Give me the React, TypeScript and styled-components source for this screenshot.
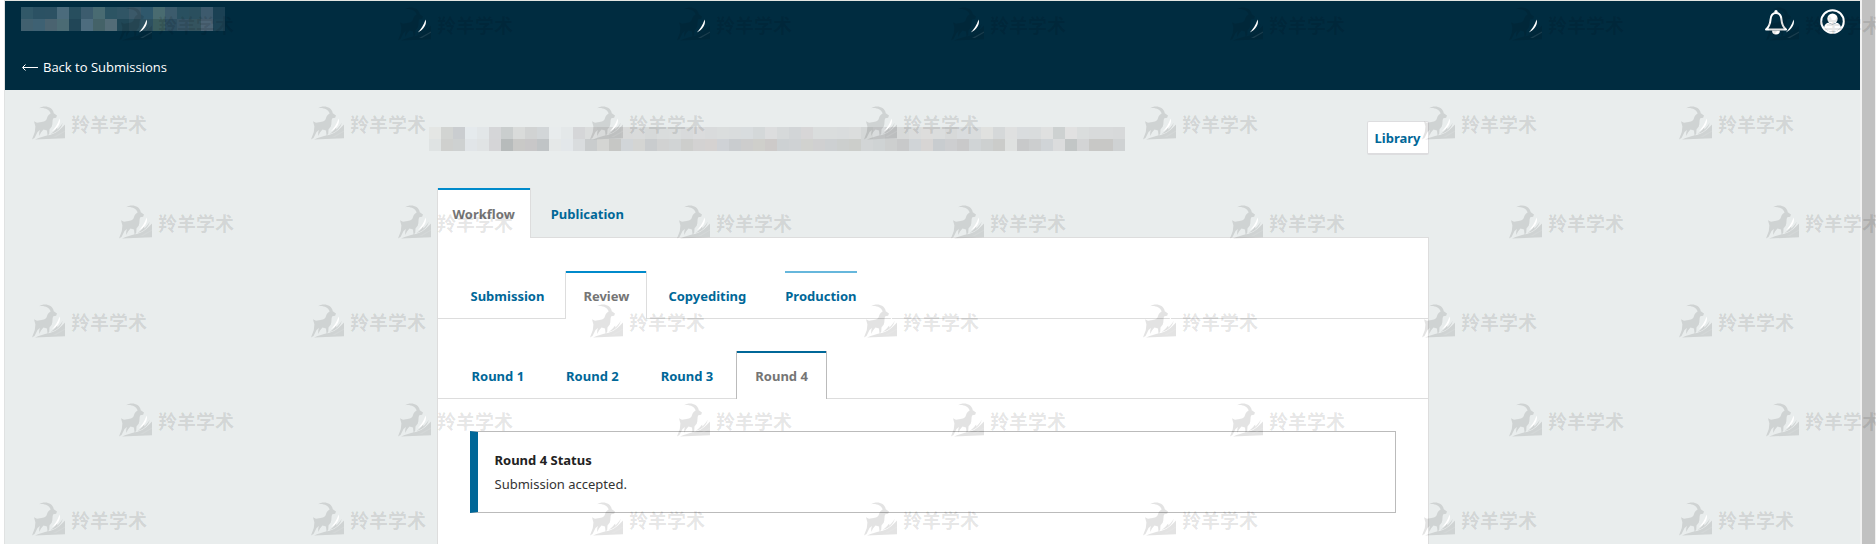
import React from "react";
import styled, { createGlobalStyle } from "styled-components";

const GlobalStyle = createGlobalStyle`
  *, *::before, *::after { box-sizing: border-box; }
  body {
    margin: 0;
    background: #fff;
    color: #222;
    font-family: "Noto Sans", "Open Sans", sans-serif;
    font-size: 13px;
    line-height: 24px;
  }
  button { font: inherit; cursor: pointer; }
`;

const Frame = styled.div`
  position: relative;
  display: flex;
  min-height: 100vh;
  padding-left: 4px;
  overflow: hidden;
`;

const Page = styled.div`
  flex: 1;
  min-width: 0;
  display: flex;
  flex-direction: column;
  background: #e9eded;
  border-left: 1px solid #e0e2e2;
  border-top: 1px solid #e3e6e2;
`;

const ScrollTrack = styled.div`
  flex: none;
  width: 16px;
  padding: 0 1px 0 2px;
  background: #f1f1f1;
  display: flex;
`;

const ScrollThumb = styled.div`
  flex: 1;
  background: #c1c1c1;
`;

const Header = styled.header`
  display: flex;
  justify-content: space-between;
  align-items: flex-start;
  height: 89px;
  padding: 6px 15px 0 16px;
  background: #002c40;
`;

const HeaderLeft = styled.div`
  display: flex;
  flex-direction: column;
  gap: 24px;
`;

const HeaderActions = styled.nav`
  display: flex;
  gap: 32px;
  padding-top: 2px;
`;

const IconButton = styled.button`
  display: flex;
  padding: 0;
  border: 0;
  background: none;
  color: #fff;
`;

const BackLink = styled.a`
  display: flex;
  align-items: center;
  gap: 5px;
  color: #fff;
  font-family: "Open Sans", sans-serif;
  text-decoration: none;
`;

const Mosaic = styled.div<{ $cols: number }>`
  display: grid;
  grid-template-columns: repeat(${(p) => p.$cols}, 12px);
  grid-auto-rows: 12px;
`;

const Cell = styled.span<{ $c: string }>`
  background: ${(p) => p.$c};
`;

const Container = styled.main`
  flex: 1;
  display: flex;
  flex-direction: column;
  width: 100%;
  max-width: 992px;
  margin: 0 auto;
  padding-top: 31px;
`;

const TitleRow = styled.div`
  display: flex;
  justify-content: space-between;
  align-items: flex-end;
  height: 34px;
  margin: 0 0 33px -8px;

  ${Mosaic} {
    margin-bottom: 4px;
  }
`;

const LibraryButton = styled.button`
  height: 34px;
  padding: 0 7px;
  background: #fff;
  border: 1px solid #dddddf;
  border-bottom-width: 2px;
  border-radius: 2px;
  color: #006798;
  font-weight: 700;
`;

type Kind = "page" | "stage" | "round";
const tabStyles: Record<Kind, { pad: number; height: number; gap: number; inset: number }> = {
  page: { pad: 15, height: 50, gap: 4, inset: 0 },
  stage: { pad: 17, height: 48, gap: 3, inset: 15 },
  round: { pad: 18, height: 48, gap: 4, inset: 15 },
};

const TabList = styled.div<{ $kind: Kind }>`
  display: flex;
  gap: ${(p) => tabStyles[p.$kind].gap}px;
  padding-left: ${(p) => tabStyles[p.$kind].inset}px;
  ${(p) => p.$kind !== "page" && "border-bottom: 1px solid #ddd;"}
`;

const TabButton = styled.button<{ $kind: Kind; $active?: boolean }>`
  height: ${(p) => tabStyles[p.$kind].height}px;
  margin-bottom: -1px;
  padding: 0 ${(p) => tabStyles[p.$kind].pad}px;
  border: 1px solid transparent;
  border-width: 0 1px;
  background: none;
  color: #006798;
  font-weight: 700;
  ${(p) =>
    p.$active &&
    `
    position: relative;
    color: #757575;
    background: #fff;
    border-color: ${p.$kind === "round" ? "#bbb" : "#ddd"};
    box-shadow: inset 0 2px 0 ${p.$kind === "round" ? "#006798" : "#008acb"};
  `}
`;

const TabLabel = styled.span<{ $marked?: boolean }>`
  display: flex;
  align-items: center;
  height: 100%;
  padding-top: 1px;
  ${(p) => p.$marked && "box-shadow: inset 0 2px 0 #66b7dc;"}
`;

const Panel = styled.section`
  flex: 1;
  display: flex;
  flex-direction: column;
  gap: 32px;
  padding: 33px 0 30px;
  background: #fff;
  border: 1px solid #ddd;
  border-bottom: 0;
`;

const Status = styled.div`
  margin: 0 32px;
  padding: 16px 17px;
  border: 1px solid #bbb;
  border-left: 8px solid #006798;
`;

const StatusTitle = styled.h2`
  margin: 0;
  font-size: 13px;
  line-height: 24px;
`;

const StatusText = styled.p`
  margin: 0;
  color: #333;
`;

const WatermarkLayer = styled.div`
  position: absolute;
  inset: 0;
  overflow: hidden;
  pointer-events: none;
`;

const Mark = styled.div<{ $x: number; $y: number }>`
  position: absolute;
  left: ${(p) => p.$x}px;
  top: ${(p) => p.$y}px;
  display: flex;
  align-items: flex-start;
  gap: 5px;
  color: rgba(0, 0, 0, 0.11);
  font: 700 19px/36px "Noto Sans CJK SC", sans-serif;
  white-space: nowrap;
`;

const headerCells = [
  "#315868", "#2b5163", "#2c5163", "#4b6b7c", "#274e5e", "#3c5c6e", "#496b72", "#2c5463", "#305565", "#3b5969", "#2f586c", "#496b70", "#3c5b6c", "#295060", "#2a4f5e", "#3d5a6d", "#1b4154",
  "#41606f", "#3e6173", "#4a6370", "#4b6b74", "#214657", "#4d6c7e", "#446268", "#536c77", "#204756", "#2a4e5d", "#2c5060", "#3b5d5e", "#2d4e60", "#365466", "#34535e", "#4b6374", "#1d4355",
];

const titleTop =
  "e4e6e4 d2d4d2 cacdd0 e5eaed e2e6e8 d5d6d8 cacece d9dbda d1d3d3 d2d6d8 e8eced e4e8e9 d5d6d8 dbdddd d8dada d6d8d8 d9dada d9dbdb d6d9d9 d9dcdc dadddd d8dadb dbdcdd d9dbdc dadddd d9dcdd d8dcde d4d8d9 dcddde d6d9da d2d5d7 d7d6d7 dadddd dadddd d9dcdd dbdddd d4d7d7 d9dcdd d4d6d7 d7d9d9 dadcdc dddddc dbdddd d7d9d9 d9dcde d9dcdd e0e1df d5d8d9 dfe0e0 d9dcde d9dcdd dfe0e0 cdd1d1 e1e1e1 dadddd d8dadb d8dadb d7d9da";
const titleBottom =
  "dfe3e3 cfd0ce ced1d1 e1e5e8 e0e3e4 d5d5d7 b7bbbb c9c9c7 c8c7c8 c0c4c6 e5e8e8 e3e7ea d9dcde c9cccd d4d5d3 c6c7c5 d1d5d8 d4d5d3 c9ccce d1d2d2 d1d4d5 cdcecc d3d2d2 d5d2d1 cfd2d6 c9cccf cdcdcd cfcfcb cdcac9 cdd1d3 cfd2d4 d1d2cf d0d0d1 cdd0d2 cccfce cccecb d2d5d6 cfd3d4 cdcfcf c8c9ca d0d4d7 d7d5d4 c8cccf cdced0 c9c9ca d0d4d6 cdd0d0 cbccca dfe1e0 c8c9ca cccecf d0d4d7 dbdcdd c2c6c6 d3d4d5 c8c8c6 c8c8c6 cfd2d3";
const titleCells = `${titleTop} ${titleBottom}`.split(" ").map((c) => "#" + c);

const evenColumns = [32, 311, 590, 864, 1143, 1422, 1679];
const oddColumns = [119, 398, 677, 951, 1230, 1509, 1766];
const rows = [
  { y: 7, xs: oddColumns },
  { y: 106, xs: evenColumns },
  { y: 205, xs: oddColumns },
  { y: 304, xs: evenColumns },
  { y: 403, xs: oddColumns },
  { y: 502, xs: evenColumns },
];

const Antelope = () => (
  <svg width="34" height="34" viewBox="0 0 34 34" fill="currentColor" aria-hidden="true">
    <path
      d="M7 2.300C12-.9 20.500.2 21.800 7.300L25 9.600 24.200 11.800 21.300 12.200C20 14.500 21 17.500 19.800 20.500L17.500 23.500 17.200 28 15.500 29.500 15 24.500 11.500 23.500 9 26.500 7.200 30 7.200 26.500 8 24 5.500 26 2.500 32 0 33.500 2.800 26 3.400 20.500 2 15.300 5 16.800C9 16 13 16 14.600 13.200 15.500 11 15.800 9.200 18.600 7.600 17.600 3.600 12.500 1.400 7 2.300Z"
    />
    <path d="M3 33.600C8 31.500 12 30 16 29.300 23.500 28 28.500 23.500 33 18.500L33 32.300Z" />
    <path d="M18.500 28C22 26 24 23.500 25 20.800L25.400 23.400C28 21.300 29.500 19 30.600 16.800 30 22 24.500 26.800 18.500 28Z" />
    <path d="M27.600 12.500C29.200 16.800 25.800 22.800 19.800 25.500 22.700 22.300 25.800 18.500 27.600 12.500Z" fill="#fff" />
    <path d="M21 31 33 24.500 33 25.700 24 31Z" fill="#fff" fillOpacity="0.1" />
  </svg>
);

const Bell = () => (
  <svg width="24" height="26" viewBox="0 0 24 26" fill="none" aria-hidden="true">
    <path
      d="M2 20.500c3.500-3 4.200-5.200 4.500-9.700C6.800 6.400 8.500 4 12 4s5.200 2.400 5.500 6.800c.3 4.500 1 6.700 4.500 9.700Z"
      stroke="currentColor"
      strokeWidth="2"
      strokeLinejoin="round"
    />
    <circle cx="12" cy="2.700" r="1.700" fill="currentColor" />
    <path d="M8 21.500h8a4 4 0 0 1-8 0Z" fill="currentColor" />
  </svg>
);

const User = () => (
  <svg width="25" height="25" viewBox="0 0 25 25" aria-hidden="true">
    <circle cx="12.500" cy="12.500" r="11.300" fill="none" stroke="currentColor" strokeWidth="2" />
    <circle cx="12.500" cy="9.800" r="5.200" fill="currentColor" />
    <path d="M4 18.500c.8-3.400 2.400-4.500 4.700-4.700a6 6 0 0 0 7.600 0c2.300.2 3.900 1.300 4.700 4.700a10.500 10.500 0 0 1-17 0Z" fill="currentColor" />
  </svg>
);

const Arrow = () => (
  <svg width="17" height="9" viewBox="0 0 17 9" fill="none" stroke="currentColor" aria-hidden="true">
    <path d="M2 4.500h15M4.500 1.500l-3 3 3 3" />
  </svg>
);

type TabItem = { label: string; active?: boolean; marked?: boolean };

const Tabs = ({ kind, name, items }: { kind: Kind; name: string; items: TabItem[] }) => (
  <TabList $kind={kind} role="tablist" aria-label={name}>
    {items.map((t) => (
      <TabButton key={t.label} $kind={kind} $active={t.active} role="tab" aria-selected={!!t.active}>
        <TabLabel $marked={t.marked}>{t.label}</TabLabel>
      </TabButton>
    ))}
  </TabList>
);

export default function App() {
  return (
    <>
      <GlobalStyle />
      <Frame>
        <Page>
          <Header>
            <HeaderLeft>
              <Mosaic $cols={17} aria-hidden="true">
                {headerCells.map((c, i) => (
                  <Cell key={i} $c={c} />
                ))}
              </Mosaic>
              <BackLink href="#submissions">
                <Arrow />
                Back to Submissions
              </BackLink>
            </HeaderLeft>
            <HeaderActions aria-label="User">
              <IconButton aria-label="Notifications">
                <Bell />
              </IconButton>
              <IconButton aria-label="Account">
                <User />
              </IconButton>
            </HeaderActions>
          </Header>
          <Container>
            <TitleRow>
              <Mosaic $cols={58} aria-hidden="true">
                {titleCells.map((c, i) => (
                  <Cell key={i} $c={c} />
                ))}
              </Mosaic>
              <LibraryButton>Library</LibraryButton>
            </TitleRow>
            <Tabs
              kind="page"
              name="Submission sections"
              items={[{ label: "Workflow", active: true }, { label: "Publication" }]}
            />
            <Panel>
              <Tabs
                kind="stage"
                name="Workflow stages"
                items={[
                  { label: "Submission" },
                  { label: "Review", active: true },
                  { label: "Copyediting" },
                  { label: "Production", marked: true },
                ]}
              />
              <Tabs
                kind="round"
                name="Review rounds"
                items={[
                  { label: "Round 1" },
                  { label: "Round 2" },
                  { label: "Round 3" },
                  { label: "Round 4", active: true },
                ]}
              />
              <Status>
                <StatusTitle>Round 4 Status</StatusTitle>
                <StatusText>Submission accepted.</StatusText>
              </Status>
            </Panel>
          </Container>
        </Page>
        <ScrollTrack>
          <ScrollThumb />
        </ScrollTrack>
        <WatermarkLayer>
          {rows.map((r) =>
            r.xs.map((x) => (
              <Mark key={`${x}-${r.y}`} $x={x} $y={r.y}>
                <Antelope />
                羚羊学术
              </Mark>
            ))
          )}
        </WatermarkLayer>
      </Frame>
    </>
  );
}
